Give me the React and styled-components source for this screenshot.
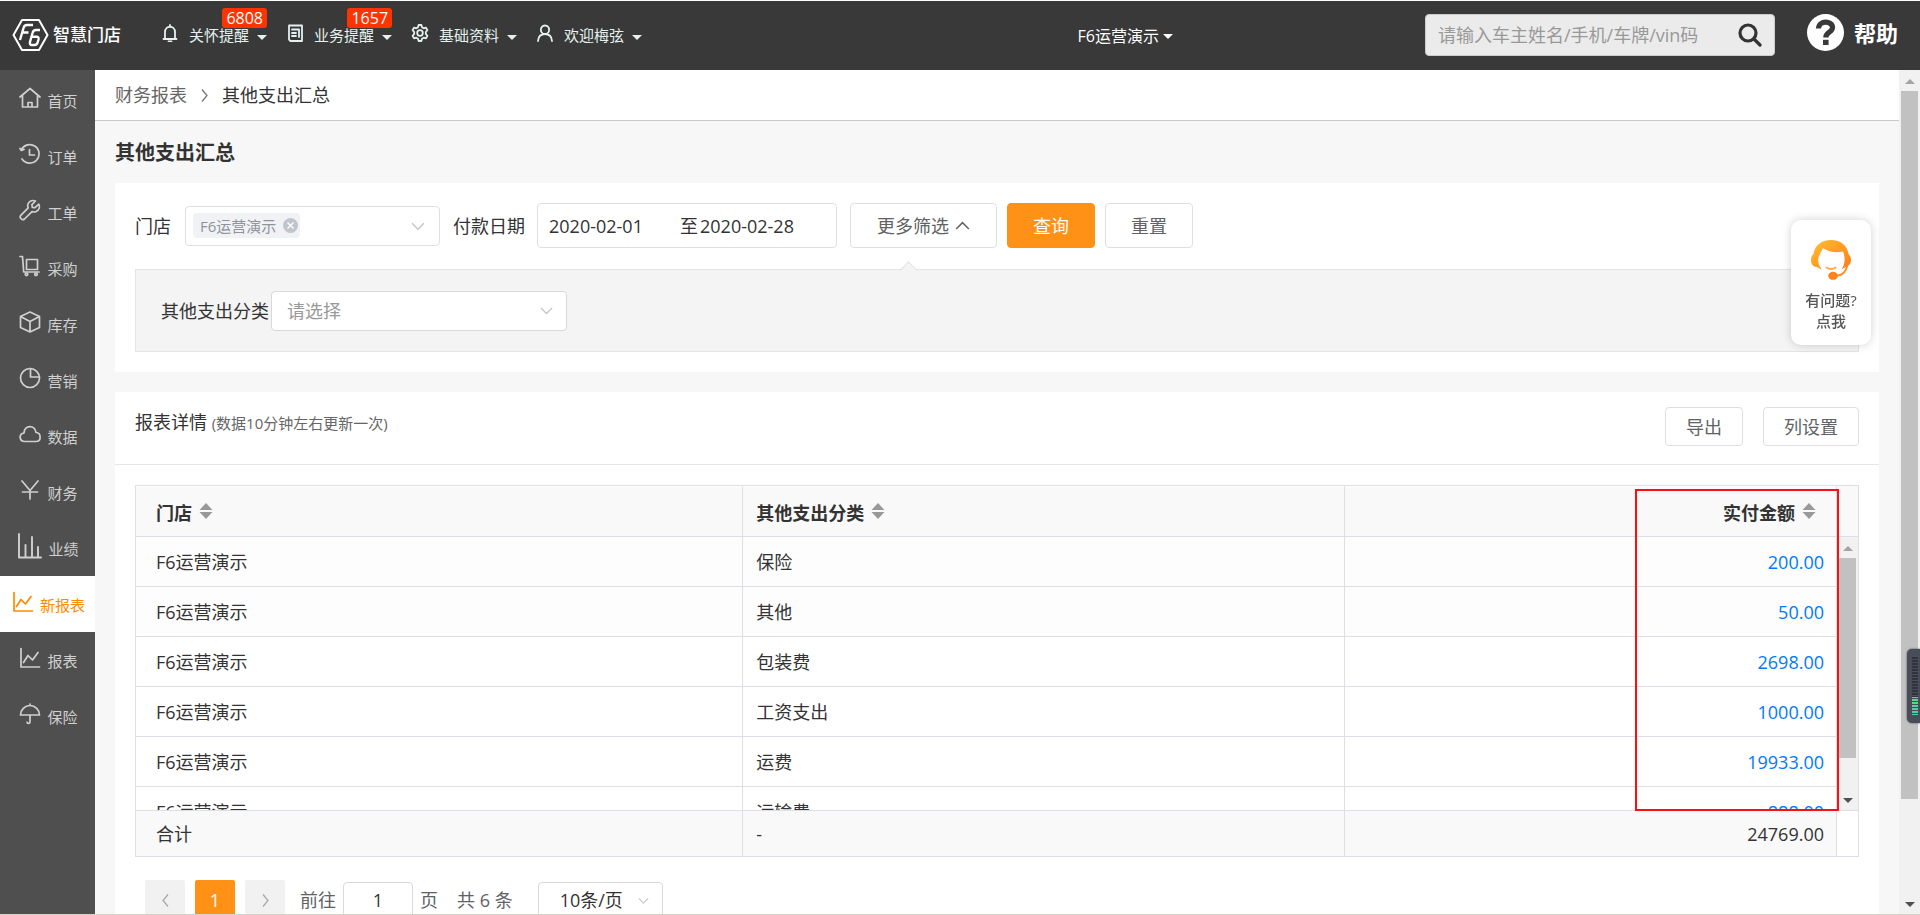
import React from 'react';
import styled, { createGlobalStyle, css } from 'styled-components';

const GlobalStyle = createGlobalStyle`
  * { box-sizing: border-box; }
  body {
    margin: 0;
    color: #333;
    background: #f7f7f7;
    font: 18px/26px "Open Sans", "Noto Sans CJK SC", sans-serif;
  }
  button, input, select { font: inherit; color: inherit; margin: 0; }
  button { cursor: pointer; }
  a { color: inherit; text-decoration: none; }
  svg { display: block; flex: none; }
`;

/* ---------- shell ---------- */

const Shell = styled.div`
  display: flex;
  flex-direction: column;
  height: 100vh;
  overflow: hidden;
  border-bottom: 1px solid #d6d2ce;
`;

const Workspace = styled.div`
  display: flex;
  flex: 1;
  min-height: 0;
`;

const Main = styled.main`
  flex: 1;
  min-width: 0;
  overflow: hidden;
`;

/* ---------- header ---------- */

const Header = styled.header`
  display: flex;
  align-items: center;
  flex: none;
  height: 70px;
  padding: 0 22px 2px 12px;
  border-top: 1px solid #fff;
  background: #393939;
  color: #fff;
`;

const HeaderSide = styled.div`
  display: flex;
  align-items: center;
  flex: ${(p) => (p.$end ? 'none' : 1)};
`;

const Logo = styled.a`
  display: flex;
  align-items: center;
  gap: 4px;
  width: 149px;
  font-size: 17px;
  font-weight: 500;
`;

const TopNav = styled.nav`
  display: flex;
  gap: 19px;
`;

const TopLink = styled.a`
  position: relative;
  display: flex;
  align-items: center;
  color: #e4f1ee;
  font-size: 15px;
  line-height: 18px;

  & > svg { margin-bottom: 4px; }
  & > span { margin: 0 8px 0 10px; }
`;

const Badge = styled.b`
  position: absolute;
  right: 0;
  bottom: 18px;
  padding: 0 4px;
  border-radius: 3px;
  background: #ff3300;
  color: #fff;
  font-size: 16px;
  font-weight: 400;
  line-height: 20px;
`;

const Caret = styled.i`
  border: 5px solid transparent;
  border-top-color: currentColor;
  border-bottom: 0;
  margin-top: 6px;
`;

const ShopSwitch = styled.button`
  display: flex;
  align-items: center;
  gap: 4px;
  margin-right: 252px;
  padding: 2px 0 0;
  border: 0;
  background: none;
  font-size: 16px;

  ${Caret} { margin-top: 2px; }
`;

const SearchForm = styled.form`
  display: flex;
  align-items: center;
  width: 350px;
  height: 42px;
  margin-right: 32px;
  padding: 0 12px;
  border: 1px solid #ccc;
  border-radius: 4px;
  background: #ebebeb;
  color: #333;

  input {
    flex: 1;
    min-width: 0;
    padding: 0;
    border: 0;
    outline: 0;
    background: none;
  }
  input::placeholder { color: #999; }
  button { padding: 0; border: 0; background: none; }
`;

const HelpLink = styled.a`
  display: flex;
  align-items: center;
  gap: 10px;
  padding-bottom: 4px;
  font-size: 22px;
  font-weight: 700;
`;

/* ---------- sidebar ---------- */

const Sidebar = styled.nav`
  flex: none;
  width: 95px;
  padding-top: 2px;
  background: #4f4f4f;
`;

const SideLink = styled.a`
  display: flex;
  align-items: center;
  justify-content: center;
  gap: 6px;
  height: 56px;
  padding: 2px 0 0 2px;
  font-size: 15px;
  color: ${(p) => (p.$active ? '#ff8a00' : '#d0d0d0')};
  background: ${(p) => (p.$active ? '#fff' : 'transparent')};

  svg { margin-bottom: 6px; }
`;

/* ---------- page ---------- */

const Breadcrumb = styled.nav`
  display: flex;
  align-items: center;
  gap: 11px;
  height: 51px;
  padding-left: 20px;
  border-bottom: 1px solid #c9c9c9;
  background: #fff;

  a { color: #666; }
`;

const Page = styled.div`
  padding: 0 20px;
`;

const PageTitle = styled.h1`
  margin: 0;
  padding: 17px 0 15px;
  font-size: 20px;
  line-height: 30px;
`;

const Card = styled.section`
  margin-bottom: 20px;
  background: #fff;
`;

const FilterCard = styled(Card)`
  padding: 20px;
`;

const FilterRow = styled.div`
  display: flex;
  align-items: center;
`;

const Label = styled.label`
  flex: none;
  margin-right: ${(p) => p.$gap || 0}px;
`;

const fieldBorder = css`
  border: 1px solid #dcdfe6;
  border-radius: 4px;
  background: #fff;
`;

const MultiSelect = styled.div`
  ${fieldBorder}
  display: flex;
  align-items: center;
  width: 255px;
  height: 40px;
  margin-right: 13px;
  padding: 0 14px 0 7px;

  input {
    flex: 1;
    min-width: 0;
    padding: 0;
    border: 0;
    outline: 0;
    background: none;
  }
`;

const Tag = styled.span`
  display: flex;
  align-items: center;
  gap: 7px;
  height: 25px;
  padding: 0 2px 0 7px;
  border-radius: 4px;
  background: #f0f2f5;
  color: #909399;
  font-size: 15px;

  button { padding: 0; border: 0; background: none; }
`;

const DateRange = styled.div`
  ${fieldBorder}
  display: flex;
  align-items: center;
  width: 300px;
  height: 45px;
  margin-right: 13px;
  padding-left: 11px;

  input {
    width: 131px;
    padding: 0;
    border: 0;
    outline: 0;
    background: none;
  }
  input + span + input { flex: 1; min-width: 0; margin-left: 2px; }
`;

const Button = styled.button`
  ${fieldBorder}
  display: flex;
  align-items: center;
  justify-content: center;
  gap: 6px;
  height: ${(p) => (p.$compact ? 39 : 45)}px;
  padding: 0 ${(p) => p.$pad || 25}px;
  color: #606266;

  ${(p) => p.$primary && css`
    border-color: #ff9116;
    background: #ff9116;
    color: #fff;
  `}
`;

const ButtonGroup = styled.div`
  display: flex;
  gap: ${(p) => p.$gap}px;
`;

const MorePanel = styled.div`
  position: relative;
  display: flex;
  align-items: center;
  height: 83px;
  margin-top: 21px;
  padding-left: 25px;
  border: 1px solid #e4e4e4;
  background: #f4f4f4;

  &::before {
    content: "";
    position: absolute;
    left: 766px;
    top: -6px;
    width: 12px;
    height: 12px;
    border: 1px solid #e4e4e4;
    border-right: 0;
    border-bottom: 0;
    background: #f4f4f4;
    transform: rotate(45deg);
  }
`;

const SelectBox = styled.div`
  display: grid;
  align-items: center;
  width: ${(p) => p.$width}px;

  & > * { grid-area: 1 / 1; }
  & > svg { justify-self: end; margin-right: 14px; pointer-events: none; }
  select {
    ${fieldBorder}
    border-color: #d9d9d9;
    width: 100%;
    height: ${(p) => p.$height}px;
    padding: 0 30px 0 ${(p) => p.$pad}px;
    appearance: none;
    outline: 0;
    color: ${(p) => (p.$placeholder ? '#999' : '#333')};
  }
`;

/* ---------- report ---------- */

const CardHead = styled.div`
  display: flex;
  align-items: flex-start;
  justify-content: space-between;
  height: 73px;
  padding: 15px 20px 0;
  border-bottom: 1px solid #e6e6e6;

  h2 {
    margin: 2px 0 0;
    font-size: 18px;
    font-weight: 400;
  }
  small { font-size: 15px; color: #666; }
`;

const ReportBody = styled.div`
  padding: 20px;
`;

const Grid = styled.div`
  position: relative;
  border: 1px solid #dcdfe6;
`;

const GridSection = styled.div`
  display: flex;
  overflow: hidden;
  height: ${(p) => (p.$viewport ? `${p.$viewport}px` : 'auto')};
  border-top: ${(p) => (p.$ruled ? '1px solid #dcdfe6' : 0)};
`;

const Table = styled.table`
  flex: 1;
  min-width: 0;
  align-self: flex-start;
  table-layout: fixed;
  border-collapse: separate;
  border-spacing: 0;

  col:nth-child(1) { width: 35.7%; }
  col:nth-child(2) { width: 35.4%; }
`;

const cell = css`
  height: ${(p) => p.$height || 50}px;
  padding: 0 12px 0 13px;
  border-right: 1px solid #dcdfe6;
  text-align: left;
  background: ${(p) => p.$fill || '#fff'};

  &:first-child { padding-left: 20px; }
  &:last-child { text-align: right; }
`;

const HeadCell = styled.th`
  ${cell}
  border-top: 1px solid #fff;
  border-bottom: 1px solid #dcdfe6;

  &:last-child { padding-right: 20px; }
`;

const Cell = styled.td`
  ${cell}
  border-bottom: ${(p) => (p.$last ? 0 : '1px solid #dcdfe6')};
  a { color: #007aff; }
`;

const SortButton = styled.button`
  display: inline-flex;
  align-items: center;
  gap: 7px;
  padding: 0;
  border: 0;
  background: none;
  font-weight: 700;
  vertical-align: middle;

  svg { margin-bottom: 3px; }
`;

const Gutter = styled.div`
  flex: none;
  width: 21px;
  background: ${(p) => (p.$filled ? '#f9f9f9' : '#fff')};
  border-bottom: ${(p) => (p.$filled ? '1px solid #dcdfe6' : 0)};
`;

const Highlight = styled.div`
  position: absolute;
  top: 3px;
  right: 19px;
  bottom: 45px;
  width: 204px;
  border: 2px solid #fa1010;
  pointer-events: none;
`;

/* ---------- scrollbar ---------- */

const Track = styled.div`
  display: flex;
  flex-direction: column;
  align-items: center;
  flex: none;
  width: 21px;
  height: 100%;
  padding: 9px 0 7px;
  background: #f1f1f1;
`;

const Thumb = styled.div`
  width: 17px;
  height: ${(p) => p.$share}%;
  margin-top: 7px;
  margin-bottom: auto;
  background: #c1c1c1;
`;

const Arrow = styled.i`
  border: 5px solid transparent;
  ${(p) => (p.$down
    ? css`border-top-color: #505050; border-bottom: 0;`
    : css`border-bottom-color: #a3a3a3; border-top: 0;`)}
`;

/* ---------- pagination ---------- */

const Pagination = styled.nav`
  display: flex;
  align-items: center;
  height: 40px;
  margin: 23px 0 0 10px;
  color: #606266;
`;

const PageButton = styled.button`
  display: flex;
  align-items: center;
  justify-content: center;
  width: 40px;
  height: 40px;
  margin-right: 10px;
  padding: 0;
  border: 0;
  border-radius: 2px;
  background: ${(p) => (p.$current ? '#ff9116' : '#f1f1f1')};
  color: ${(p) => (p.$current ? '#fff' : '#a8a8a8')};
`;

const Jump = styled.label`
  display: flex;
  align-items: center;
  gap: 7px;
  margin: 0 19px 0 5px;

  input {
    ${fieldBorder}
    border-color: #d9d9d9;
    width: 70px;
    height: 36px;
    padding: 0;
    text-align: center;
    outline: 0;
    color: #333;
  }
`;

const Total = styled.span`
  margin-right: 25px;
`;

/* ---------- floating pieces ---------- */

const AskCard = styled.a`
  position: fixed;
  top: 220px;
  right: 49px;
  display: flex;
  flex-direction: column;
  align-items: center;
  width: 80px;
  height: 125px;
  padding-top: 20px;
  border-radius: 10px;
  background: #fff;
  box-shadow: 0 0 10px rgba(0, 0, 0, 0.18);
  color: #555;
  font-size: 15px;
  font-weight: 500;
  line-height: 21px;

  svg { margin-bottom: 10px; }
`;

const Meter = styled.div`
  position: fixed;
  top: 649px;
  right: 0;
  width: 13px;
  height: 74px;
  padding: 8px 2px 8px 5px;
  border-radius: 5px 0 0 5px;
  background: #494d5a;
  box-shadow: 0 0 2px #333;

  &::before {
    content: "";
    display: block;
    height: 58px;
    background:
      repeating-linear-gradient(transparent 0 2px, #494d5a 2px 3px),
      linear-gradient(#31343f 40px, #6fd08a 40px, #47cdb0);
  }
`;

/* ---------- drawings ---------- */

const Icon = ({ w = 22, h = 22, sw = 1.7, children }) => (
  <svg width={w} height={h} viewBox={`0 0 ${w} ${h}`} fill="none" stroke="currentColor"
    strokeWidth={sw} strokeLinejoin="round" strokeLinecap="round" aria-hidden="true">
    {children}
  </svg>
);

const sideIcons = {
  home: <path d="M1 10 11 1.5 21 10M3.500 8.500V20h15V8.500M9 20v-4.500h4V20" />,
  history: <path d="M2.300 7A9.300 9.300 0 1 1 3 16M1 5.500l1.300 2 2.700-1M10.500 6.500V12h5" />,
  wrench: <path d="M19.800 5.200 16 8.700l-2.700-.4-.4-2.700L16.500 2C13.500.8 10.500 1.800 9.200 4.500c-.7 1.500-.6 3 0 4.300L1.800 16.400c-1.800 2.200 1.300 5.500 3.700 3.600l7.500-7.400c1.300.5 2.800.5 4.200-.1 2.800-1.300 3.900-4.500 2.600-7.300Z" />,
  cart: <><path d="M1 1.500h2.500l1.200 15.500H20M7.500 4.500h11v10h-11z" /><circle cx="7.500" cy="19.300" r="1.300" /><circle cx="17" cy="19.300" r="1.300" /></>,
  box: <path d="m11 1 9.500 4.500v11L11 21l-9.500-4.500v-11ZM1.500 5.500 11 10.500l9.500-5M11 10.500V21" />,
  pie: <><circle cx="11" cy="11" r="9.500" /><path d="M11.500 1.500V10h9" /></>,
  cloud: <path d="M6 18.500c-6 0-6.500-7.500-1-8.500C5.500 1.500 16 1.500 17 9.500c5.500.5 5.500 9 0 9Z" />,
  yen: <path d="m3 2 8 9.500L19 2M3.500 13h15M11 11.500V20" />,
  trend: <path d="M2 1.500V20h18.500M4.500 15.500l4.500-7 4.500 4.500L19 5.500" />,
  umbrella: <path d="M1.500 12a9.500 9.500 0 0 1 19 0ZM11 2.500V1M11 12v7c0 1.500-2.500 2-3 .2" />,
};

const Chevron = ({ dir = 'down', color = '#c0c4cc', size = 13 }) => {
  const d = {
    down: 'M1 4l5.500 5.500L12 4',
    up: 'M1 9.500 6.500 4 12 9.500',
    left: 'M9 .5 4 6.500l5 6',
    right: 'M4 .5l5 6-5 6',
  }[dir];
  return (
    <svg width={size} height={size} viewBox="0 0 13 13" fill="none" stroke={color} strokeWidth="1.300" aria-hidden="true">
      <path d={d} />
    </svg>
  );
};

const SortIcon = () => (
  <svg width="14" height="16" viewBox="0 0 14 16" fill="#999" aria-hidden="true">
    <path d="M7 0l6.500 7H.5ZM7 16 .5 9h13Z" />
  </svg>
);

const LogoMark = () => (
  <svg width="37" height="34" viewBox="0 0 37 34" fill="none" stroke="#fff" strokeWidth="2" aria-hidden="true">
    <path d="M10 2h17l8.500 15L27 32H10L1.500 17Z" strokeLinejoin="round" />
    <path d="M21 7h-6c-2 0-3 1-3.500 3L8 22M10.500 14.500h6" strokeWidth="2.400" />
    <path d="M28 12h-4c-2 0-3 1-3.500 3L18 24c-.5 2 .3 3 2 3h2.500c1.800 0 2.800-1 3.300-3l.7-2.500c.4-1.800-.3-2.800-2-2.800h-5" strokeWidth="2.400" />
  </svg>
);

const topIcons = {
  bell: <path d="M9 1v1.500M4 15V8c0-7 10-7 10 0v7M2.500 15h13M7.500 17.300h3" />,
  doc: <path d="M3 1.500h13v15.500H4.500L3 15.500ZM6 5.500h7M6 9h4M6 12h4M13 5.500V13" />,
  gear: <><circle cx="9" cy="9" r="2.800" /><path d="M7.600 1h2.800l.6 2.300 1.700 1 2.300-.7 1.400 2.500L14.800 8v2l1.600 1.900-1.400 2.500-2.300-.7-1.700 1-.6 2.300H7.600L7 14.700l-1.700-1-2.300.7-1.400-2.500L3.200 10V8L1.600 6.100 3 3.600l2.300.7 1.700-1Z" /></>,
  user: <path d="M9 1.500c-5.500 0-5.500 8.500 0 8.500s5.500-8.500 0-8.500ZM2 17c.3-4.500 3-7 7-7s6.700 2.500 7 7" />,
};

const AgentIcon = () => (
  <svg width="40" height="40" viewBox="0 0 40 40" aria-hidden="true">
    <defs>
      <linearGradient id="agent" x1="0" y1="0" x2="1" y2="1">
        <stop offset="0" stopColor="#ffc034" />
        <stop offset="1" stopColor="#ff7a12" />
      </linearGradient>
    </defs>
    <path fill="url(#agent)" d="M20 0C10 0 3.500 6 2.500 14 .8 15.500 0 17.500 0 20c0 4.500 2.500 7 6 7l5 3C7 25 6 19 9 14l3-6c5 4 13 5 20 3.500 2.500 6 2 13-1.500 18l5-3c3-1 4.500-3.500 4.500-6.500 0-2.500-.8-4.500-2.500-6C36.500 6 30 0 20 0Z" />
    <path fill="none" stroke="#ffa94d" strokeWidth="1.800" strokeLinecap="round" d="M15.500 27.500c2.500 2 6.500 2 9 0" />
    <path fill="none" stroke="#ff8a1e" strokeWidth="1.800" d="M36.500 25c-1.500 7-5 10.500-11 10.700" />
    <ellipse cx="22" cy="35.800" rx="4.800" ry="4" fill="#ff831a" />
  </svg>
);

/* ---------- data ---------- */

const topItems = [
  { icon: 'bell', text: '关怀提醒', badge: '6808' },
  { icon: 'doc', text: '业务提醒', badge: '1657' },
  { icon: 'gear', text: '基础资料' },
  { icon: 'user', text: '欢迎梅弦' },
];

const sideItems = [
  ['home', '首页'], ['history', '订单'], ['wrench', '工单'], ['cart', '采购'],
  ['box', '库存'], ['pie', '营销'], ['cloud', '数据'], ['yen', '财务'],
  ['bars', '业绩'], ['trend', '新报表', true], ['trend', '报表'], ['umbrella', '保险'],
];

const rows = [
  ['保险', '200.00'], ['其他', '50.00'], ['包装费', '2698.00'],
  ['工资支出', '1000.00'], ['运费', '19933.00'], ['运输费', '888.00'],
];

const Columns = () => <colgroup><col /><col /><col /></colgroup>;

const Scrollbar = ({ share }) => (
  <Track aria-hidden="true">
    <Arrow />
    <Thumb $share={share} />
    <Arrow $down />
  </Track>
);

const SortHead = ({ children }) => (
  <HeadCell $fill="#f9f9f9" $height={51} scope="col">
    <SortButton type="button">{children}<SortIcon /></SortButton>
  </HeadCell>
);

const TopBar = () => (
  <Header>
    <HeaderSide>
      <Logo href="#home"><LogoMark />智慧门店</Logo>
      <TopNav>
        {topItems.map((item) => (
          <TopLink key={item.text} href={`#${item.icon}`}>
            <Icon w={18} h={18} sw={1.8}>{topIcons[item.icon]}</Icon>
            <span>{item.text}</span>
            <Caret />
            {item.badge && <Badge>{item.badge}</Badge>}
          </TopLink>
        ))}
      </TopNav>
    </HeaderSide>
    <ShopSwitch type="button">F6运营演示<Caret /></ShopSwitch>
    <HeaderSide $end>
      <SearchForm role="search">
        <input type="text" aria-label="搜索" placeholder="请输入车主姓名/手机/车牌/vin码" />
        <button type="button" aria-label="搜索">
          <Icon w={24} h={24} sw={3.2}><circle cx="10" cy="10" r="8" /><path d="m16 16 6 6" /></Icon>
        </button>
      </SearchForm>
      <HelpLink href="#help">
        <svg width="37" height="37" viewBox="0 0 37 37" aria-hidden="true">
          <circle cx="18.500" cy="18.500" r="18.500" fill="#fff" />
          <path d="M11.500 14.500c.3-8.500 14-8 14-1 0 5-6.700 4.500-6.700 10" fill="none" stroke="#393939" strokeWidth="5.200" />
          <path d="M16 25.800h5.600v5.200H16z" fill="#393939" />
        </svg>
        帮助
      </HelpLink>
    </HeaderSide>
  </Header>
);

const SideNav = () => (
  <Sidebar>
    {sideItems.map(([icon, text, active]) => (
      <SideLink key={text} href={`#${text}`} $active={active}>
        {icon === 'bars'
          ? <Icon w={24} h={26} sw={1.9}><path d="M1 1v23.500h22M7.500 24V12M14 24V4M20 24V14" /></Icon>
          : <Icon>{sideIcons[icon]}</Icon>}
        {text}
      </SideLink>
    ))}
  </Sidebar>
);

const Filters = () => (
  <FilterCard>
    <FilterRow>
      <Label htmlFor="store" $gap={14}>门店</Label>
      <MultiSelect>
        <Tag>
          F6运营演示
          <button type="button" aria-label="移除">
            <svg width="15" height="15" viewBox="0 0 15 15" aria-hidden="true">
              <circle cx="7.500" cy="7.500" r="7.500" fill="#c0c4cc" />
              <path d="m4.500 4.500 6 6m0-6-6 6" stroke="#fff" strokeWidth="1.400" />
            </svg>
          </button>
        </Tag>
        <input id="store" type="text" />
        <Chevron size={14} />
      </MultiSelect>
      <Label htmlFor="from" $gap={12}>付款日期</Label>
      <DateRange>
        <input id="from" type="text" defaultValue="2020-02-01" />
        <span>至</span>
        <input type="text" aria-label="结束日期" defaultValue="2020-02-28" />
      </DateRange>
      <ButtonGroup $gap={10}>
        <Button type="button" $pad={26}>更多筛选<Chevron dir="up" color="#606266" size={15} /></Button>
        <Button type="button" $primary>查询</Button>
        <Button type="button">重置</Button>
      </ButtonGroup>
    </FilterRow>
    <MorePanel>
      <Label htmlFor="category" $gap={2}>其他支出分类</Label>
      <SelectBox $width={296} $height={40} $pad={15} $placeholder>
        <select id="category"><option>请选择</option></select>
        <Chevron />
      </SelectBox>
    </MorePanel>
  </FilterCard>
);

const Report = () => (
  <Card>
    <CardHead>
      <h2>报表详情 <small>(数据10分钟左右更新一次)</small></h2>
      <ButtonGroup $gap={20}>
        <Button type="button" $compact $pad={20}>导出</Button>
        <Button type="button" $compact $pad={20}>列设置</Button>
      </ButtonGroup>
    </CardHead>
    <ReportBody>
      <Grid>
        <GridSection>
          <Table>
            <Columns />
            <thead>
              <tr>
                <SortHead>门店</SortHead>
                <SortHead>其他支出分类</SortHead>
                <SortHead>实付金额</SortHead>
              </tr>
            </thead>
          </Table>
          <Gutter $filled />
        </GridSection>
        <GridSection $viewport={273}>
          <Table>
            <Columns />
            <tbody>
              {rows.map(([name, amount], i) => (
                <tr key={name}>
                  <Cell $fill={i < 2 ? '#fdfdfd' : '#fff'}>F6运营演示</Cell>
                  <Cell $fill={i < 2 ? '#fdfdfd' : '#fff'}>{name}</Cell>
                  <Cell $fill={i < 2 ? '#fdfdfd' : '#fff'}><a href="#detail">{amount}</a></Cell>
                </tr>
              ))}
            </tbody>
          </Table>
          <Scrollbar share={78} />
        </GridSection>
        <GridSection $ruled>
          <Table>
            <Columns />
            <tbody>
              <tr>
                <Cell $fill="#f9f9f9" $height={45} $last>合计</Cell>
                <Cell $fill="#f9f9f9" $height={45} $last>-</Cell>
                <Cell $fill="#f9f9f9" $height={45} $last>24769.00</Cell>
              </tr>
            </tbody>
          </Table>
          <Gutter />
        </GridSection>
        <Highlight />
      </Grid>
      <Pagination>
        <PageButton type="button" aria-label="上一页"><Chevron dir="left" color="#a8a8a8" /></PageButton>
        <PageButton type="button" $current>1</PageButton>
        <PageButton type="button" aria-label="下一页"><Chevron dir="right" color="#a8a8a8" /></PageButton>
        <Jump>前往<input type="text" defaultValue="1" />页</Jump>
        <Total>共 6 条</Total>
        <SelectBox $width={125} $height={36} $pad={21}>
          <select aria-label="每页条数"><option>10条/页</option></select>
          <Chevron size={11} />
        </SelectBox>
      </Pagination>
    </ReportBody>
  </Card>
);

export default function App() {
  return (
    <Shell>
      <GlobalStyle />
      <TopBar />
      <Workspace>
        <SideNav />
        <Main>
          <Breadcrumb>
            <a href="#finance">财务报表</a>
            <Chevron dir="right" color="#777" />
            <span>其他支出汇总</span>
          </Breadcrumb>
          <Page>
            <PageTitle>其他支出汇总</PageTitle>
            <Filters />
            <Report />
          </Page>
        </Main>
        <Scrollbar share={85.5} />
      </Workspace>
      <AskCard href="#ask">
        <AgentIcon />
        <span>有问题?</span>
        <span>点我</span>
      </AskCard>
      <Meter />
    </Shell>
  );
}
